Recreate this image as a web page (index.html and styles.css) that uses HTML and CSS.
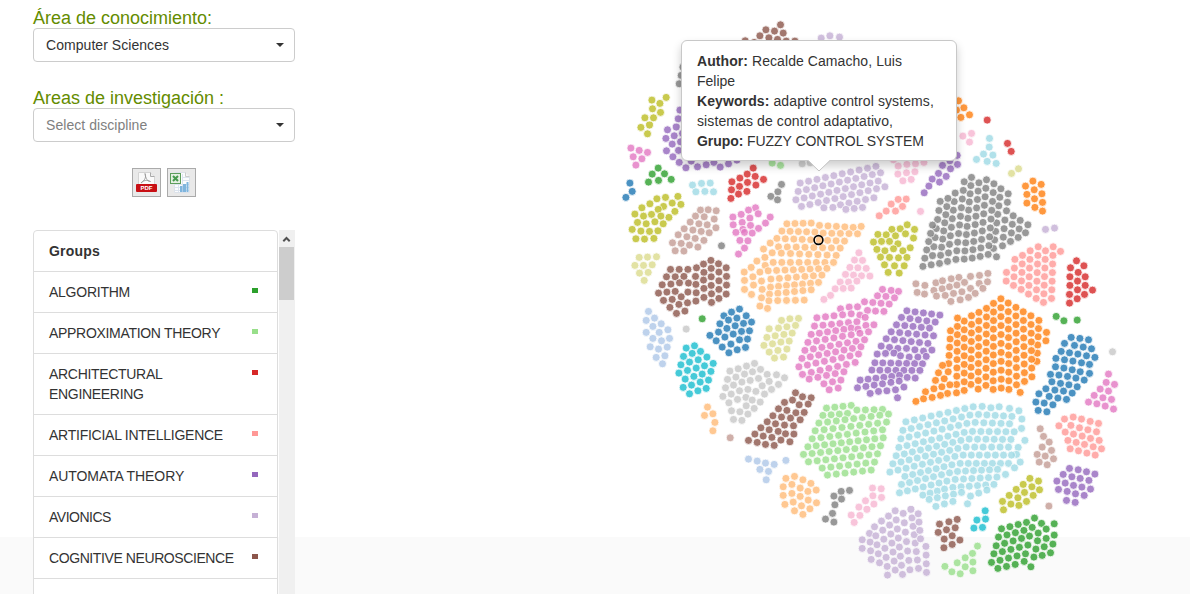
FILE: index.html
```html
<!DOCTYPE html>
<html lang="es">
<head>
<meta charset="utf-8">
<title>Groups</title>
<link rel="stylesheet" href="styles.css">
</head>
<body>
<div class="page">
  <aside class="sidebar">
    <label class="label">Área de conocimiento:</label>
    <div class="select">Computer Sciences<span class="caret"></span></div>
    <label class="label label-second">Areas de investigación :</label>
    <div class="select placeholder">Select discipline<span class="caret"></span></div>
    <div class="exports">
      <button class="export" aria-label="PDF">
        <svg width="27" height="27" viewBox="0 0 27 27">
          <path d="M5.500 3.500h12l4 4v14h-16z" fill="#fafafa" stroke="#d4d4d4"/>
          <path d="M17.500 3.500v4h4" fill="#eee" stroke="#aaa"/>
          <path d="M12 4.500c1.500 3 0 7-4 9.500c1.500-2.500 6.500-3.500 9.500-1.500c-2.500 .5-5-3-5.500-8z" fill="none" stroke="#999" stroke-width=".9"/>
          <rect x="3" y="15" width="21" height="8" rx="1" fill="#c80f14"/>
          <text x="13.500" y="21.200" class="pdf-text">PDF</text>
        </svg>
      </button>
      <button class="export" aria-label="Excel">
        <svg width="27" height="27" viewBox="0 0 27 27">
          <path d="M6.500 3.500h11l4 4v16h-15z" fill="#fbfcfe" stroke="#dce2ea"/>
          <path d="M7 15.500h14M7 18.500h14M10.500 12v11M14.500 5v18M7 21.500h14M14 8.500h7M14 11.500h7" stroke="#dbe4ef" fill="none"/>
          <path d="M17.500 3.500v4h4" fill="#f5f5f5" stroke="#ccc"/>
          <path d="M12 17h2.500v6H12zM15 15h3v8h-3zM18.500 13h2v10h-2z" fill="#7fb5de"/>
          <rect x="2.500" y="4.500" width="10" height="10" fill="#e4f0e2" stroke="#5d9e5c"/>
          <path d="M5 7l5 5M10 7l-5 5" stroke="#459a4c" stroke-width="2"/>
        </svg>
      </button>
    </div>
    <div class="list-area">
      <ul class="groups">
        <li class="item heading">Groups</li>
        <li class="item tight">ALGORITHM<i class="mark c4"></i></li>
        <li class="item snug">APPROXIMATION THEORY<i class="mark c5"></i></li>
        <li class="item snug">ARCHITECTURAL<br>ENGINEERING<i class="mark c6"></i></li>
        <li class="item tight">ARTIFICIAL INTELLIGENCE<i class="mark c7"></i></li>
        <li class="item loose">AUTOMATA THEORY<i class="mark c8"></i></li>
        <li class="item tightest">AVIONICS<i class="mark c9"></i></li>
        <li class="item tighter">COGNITIVE NEUROSCIENCE<i class="mark c10"></i></li>
        <li class="item">&nbsp;</li>
      </ul>
      <div class="scrollbar">
        <svg class="up" width="16" height="17" viewBox="0 0 16 17"><path d="M4.300 11.200L7.500 8l3.200 3.200" fill="none" stroke="#505050" stroke-width="2"/></svg>
        <div class="thumb"></div>
      </div>
    </div>
  </aside>
  <main class="chart">
    <svg id="bubbles" width="590" height="594" viewBox="600 0 590 594"></svg>
    <div class="popover">
      <div class="line-author"><b>Author:</b> Recalde Camacho, Luis</div>
      <div>Felipe</div>
      <div class="line-keywords"><b>Keywords:</b> adaptive control systems,</div>
      <div class="line-more">sistemas de control adaptativo,</div>
      <div class="line-group"><b>Grupo:</b> FUZZY CONTROL SYSTEM</div>
      <svg class="tip" width="24" height="12" viewBox="0 0 24 12"><path d="M1 0h22L12 10.500z" fill="#fff"/><path d="M1 .5L12 11L23 .5" fill="none" stroke="#c4c4c4"/></svg>
    </div>
  </main>
</div>
<script src="chart.js"></script>
</body>
</html>
```

FILE: styles.css
```css
* { box-sizing: border-box; }
body {
  margin: 0;
  height: 594px;
  overflow: hidden;
  background: linear-gradient(#fff 537px, #fafafa 537px);
  font: 14px/20px "Liberation Sans", Arial, sans-serif;
  color: #333;
}
.page { display: flex; height: 594px; overflow: hidden; }
.sidebar { width: 600px; flex: none; padding: 9px 0 0 33px; }
.label {
  display: block;
  height: 19px;
  line-height: 18px;
  font-size: 18px;
  color: #648c00;
}
.label-second { margin-top: 27px; }
.select {
  display: flex;
  align-items: center;
  justify-content: space-between;
  width: 262px;
  height: 34px;
  padding: 0 10px 0 12px;
  border: 1px solid #ccc;
  border-radius: 4px;
  background: #fff;
  letter-spacing: .05px;
}
.placeholder { color: #808080; }
.caret { border: 4px solid transparent; border-top-color: #333; border-bottom: 0; }
.exports { display: flex; gap: 6px; margin: 26px 0 0 99px; height: 29px; }
.export { width: 29px; height: 29px; padding: 0; border: 1px solid #aaa; background: #e9e9e9; }
.export svg { display: block; }
.pdf-text { font: bold 6px "Liberation Sans", Arial, sans-serif; fill: #fff; text-anchor: middle; }
.list-area { display: flex; gap: 1px; height: 364px; margin-top: 33px; overflow: hidden; }
.groups { width: 245px; margin: 0; padding: 0; list-style: none; }
.item {
  display: flex;
  justify-content: space-between;
  padding: 10px 19px 10px 15px;
  margin-bottom: -1px;
  border: 1px solid #ddd;
  background: #fff;
  white-space: nowrap;
}
.heading { font-weight: bold; border-radius: 4px 4px 0 0; letter-spacing: .2px; }
.loose { letter-spacing: -.08px; }
.tight { letter-spacing: -.25px; }
.snug { letter-spacing: -.31px; }
.tighter { letter-spacing: -.41px; }
.tightest { letter-spacing: -.5px; }
.item:nth-child(4) { display: grid; grid-template-columns: 1fr auto; }
.item:nth-child(4) .mark { grid-column: 2; grid-row: 1; }
.mark { width: 6px; height: 5px; margin-top: 6px; }
.c4 { background: #2ca02c; }
.c5 { background: #98df8a; }
.c6 { background: #d62728; }
.c7 { background: #ff9896; }
.c8 { background: #9467bd; }
.c9 { background: #c5b0d5; }
.c10 { background: #8c564b; }
.scrollbar { width: 16px; background: #f0f0f0; }
.up { display: block; }
.thumb { width: 15px; height: 53px; background: #cdcdcd; }
.chart { position: relative; width: 590px; }
.chart > svg { display: block; }
.popover {
  position: absolute;
  left: 81px;
  top: 40px;
  width: 276px;
  height: 121px;
  padding: 10px 14px 9px 15px;
  border: 1px solid #c8c8c8;
  border-radius: 6px;
  background: #fff;
  box-shadow: 0 5px 10px rgba(0, 0, 0, .2);
  white-space: nowrap;
}
.line-author { letter-spacing: .07px; }
.line-keywords, .line-more { letter-spacing: .1px; }
.line-group { letter-spacing: -.07px; }
.tip { position: absolute; left: 125px; top: 119px; }
```

FILE: chart.js
```js
const palette = {
  blue: "#1f77b4", lightblue: "#aec7e8", orange: "#ff7f0e", peach: "#ffbb78",
  green: "#2ca02c", lightgreen: "#98df8a", red: "#d62728", salmon: "#ff9896",
  purple: "#9467bd", lavender: "#c5b0d5", brown: "#8c564b", tan: "#c49c94",
  pink: "#e377c2", rose: "#f7b6d2", gray: "#7f7f7f", silver: "#c7c7c7",
  olive: "#bcbd22", khaki: "#dbdb8d", cyan: "#17becf", ice: "#9edae5"
};

// Cluster: colour, origin x, origin y, tokens in thirds of a pixel.
// "x,y" is one dot; "x1,y1,x2,y2,n" is a row of n evenly spaced dots.
const clusters = [
["brown",610,10,"511,44 467,59 493,63 519,69 449,77 476,83 502,88 405,92 432,97 528,93 554,93"],
["gray",610,10,"218,171 213,196 207,221"],
["olive",610,10,"168,262 125,270 149,280 127,296 151,307 104,323 130,323 118,345 92,352 112,371"],
["purple",610,10,"209,300 204,326 198,351 172,359 167,385 192,377 217,370 186,402 169,422 211,395 205,421 188,440 207,457 227,473 262,470 288,464 243,453 311,457 330,471 355,461 380,450"],
["pink",610,10,"62,414 87,421 112,427 69,440 95,446 77,465"],
["green",610,10,"144,474 126,492 163,491 115,516 145,511 183,508"],
["blue",610,10,"59,519 66,544 47,562"],
["ice",610,10,"247,525 274,520 300,519 257,545 284,544 310,545"],
["red",610,10,"429,474 411,492 389,504 435,499 365,515 460,508 388,529 412,517 437,525 364,539 385,552 410,544 362,565"],
["gray",610,10,"514,523 503,545 482,559 502,569"],
["lightgreen",610,10,"486,459 511,466"],
["silver",610,10,"576,461 600,458"],
["lavender",800,10,"63,84 89,77 118,81"],
["orange",800,10,"475,272 491,293 469,300 508,314 482,322"],
["red",800,10,"561,330 622,400 633,424"],
["rose",800,10,"488,378 514,370 508,396"],
["ice",800,10,"568,385 567,411 550,432 578,435 529,448 561,454 588,460"],
["khaki",800,10,"655,476 634,490"],
["rose",800,10,"280,449 294,468 320,463 346,461 371,457 293,492 319,488 344,485 308,512 333,508"],
["purple",800,10,"471,436 472,463 427,466 451,476 449,452 415,490 438,499 396,507 418,516 386,528 372,548"],
["lavender",800,10,"0,519,227,469,10 -6,544,241,488,11 -13,569,234,513,11 4,589,254,530,11 121,584,221,563,5 71,593 98,592 137,598 162,595 187,592"],
["salmon",780,180,"378,57 354,58 333,72 367,79 318,93 346,93 297,107"],
["rose",780,180,"421,94"],
["olive",780,180,"381,134 403,148 335,148 360,146 293,163 318,164 346,167 400,174 376,161 280,186 304,184 328,184 353,191 390,203 290,208 314,212 340,206 368,212 380,232 301,231 328,232 355,233 313,254 343,257 372,257 324,277 357,279"],
["olive",610,180,"203,49 166,52 140,56 212,73 186,69 160,79 119,71 194,94 144,88 95,83 176,112 152,108 124,103 100,108 74,102 159,131 134,125 108,131 82,127 143,152 118,154 92,153 66,148 131,175 103,177 77,176"],
["tan",610,180,"271,90 294,89 318,92 256,108 282,110 312,117 240,126 266,131 291,134 317,143 222,146 248,150 273,154 297,158 204,164 230,170 255,175 281,181 187,188 213,190 238,195 263,201 195,212 221,213"],
["gray",610,180,"334,197"],
["pink",610,180,"436,83 415,90 393,103 444,101 368,111 419,114 480,111 396,127 369,134 421,136 466,129 398,148 445,145 377,157 403,157 426,159 389,181 413,182 403,204 385,222"],
["khaki",610,180,"87,232 112,231 139,230 74,256 100,256 126,254 88,279 114,277 102,301"],
["brown",610,180,"302,241 181,268 207,268 233,268 259,263 280,252 325,251 303,265 348,263 169,290 195,290 221,289 256,289 281,277 326,276 303,290 349,289 156,314 182,312 208,308 235,309 257,313 280,300 326,302 303,316 349,315 145,339 170,336 195,334 233,336 258,338 281,325 326,328 304,341 348,342 160,361 186,358 213,350 257,363 281,352 326,355 304,367 179,382 206,373 232,368 199,400 224,393"],
["green",610,180,"276,416"],
["peach",780,180,"20,131,93,129,4 118,136,219,142,5 243,139 5,153,104,156,5 129,159,232,161,5 -10,175,193,183,9 -30,189 -5,200,180,204,8 -50,207 -24,218,168,226,8 -46,232 -70,243 -45,256 -21,247,160,247,8 -87,262 -61,276 -36,272,140,265,8"],
["peach",780,180,"-28,297,125,285,7 -29,321,115,307,7 -32,342,93,329,6 -34,362,72,360,5"],
["peach",610,180,"402,276 428,290 403,301 430,315 403,328 424,343 454,303 456,328 454,353 449,378 472,385"],
["rose",780,180,"236,218 223,240 247,241 209,262 233,263 258,265 196,283 220,285 244,287 269,288 180,306 205,306 230,303 165,326 189,325 213,324 151,346 131,358"],
["gray",940,160,"204,101,199,152,3 194,180,187,257,4 219,167,211,244,4 240,181,234,232,3 263,194 256,218 182,86,160,265,8 161,71,144,283,9 169,290 139,59,120,289,10 116,68,96,294,10 94,52,72,297,11 72,65,47,298,10 45,99,22,304,9 23,115,-2,310,9 0,124,-27,314,8 -23,195,-52,319,6"],
["orange",940,160,"278,63 303,73 256,78 282,89 305,101 260,103 283,116 307,127 260,129 284,142 307,153"],
["lavender",940,160,"316,208 343,204"],
["salmon",940,160,"361,274 339,260,334,415,7 316,272,310,427,7 294,260,288,415,7 270,272,265,402,6 247,286,243,388,5 224,298,220,376,4 199,337 198,363"],
["red",940,160,"409,302 431,317 391,323 414,337 389,350 435,350 412,363 389,376 435,376 457,390 412,389 433,403 388,403 411,416 388,429"],
["tan",940,160,"-73,371 -69,397 -46,376 -47,402 -19,391 -13,368 7,362 6,386 -11,408 15,406 33,356 56,352 28,380 50,375 73,367 91,349 118,346 143,340 142,365 117,370 91,385 128,385 40,400 65,395 105,400 85,412 60,419 32,424"],
["lightblue",630,300,"55,34 73,54 48,61 93,71 68,79 113,89 48,97 87,97 68,115 94,122 118,115 60,140 85,147 111,141 78,172 104,167 97,191"],
["silver",630,300,"168,87"],
["blue",630,300,"328,27 304,36 281,47 348,47 320,54 295,60 269,71 364,66 340,70 315,77 290,85 265,96 239,106 358,92 334,94 309,102 284,111 258,122 352,117 328,119 302,132 276,141 346,142 321,149 296,158"],
["cyan",630,300,"193,137 168,144 211,154 186,160 160,169 230,171 204,179 178,186 152,194 249,190 223,197 198,204 172,211 146,219 242,214 216,222 191,229 165,237 235,240 210,246 184,255 159,262 228,265 203,272 178,281"],
["khaki",630,300,"505,55 479,56 454,61 496,76 470,80 445,84 417,86 486,99 461,103 435,107 410,112 477,123 452,126 427,131 401,136 470,147 443,151 417,156 460,171 433,174"],
["silver",630,300,"373,190 349,198 324,206 299,213 391,208 367,215 343,222 317,231 292,238 439,224 411,223 385,235 360,241 335,246 310,255 286,263 463,233 417,244 445,253 396,257 353,268 328,272 303,282 278,289 424,268 377,274 403,282 347,292 366,300 322,298 296,308 390,306 348,317 372,325 304,332 329,335 353,342 310,358 335,361"],
["peach",630,300,"232,321 223,346 248,341 254,367 248,392"],
["tan",630,300,"300,413"],
["brown",630,300,"496,278 517,290 543,293 487,300 463,307 507,314 534,312 445,326 470,331 497,338 522,337 428,347 454,351 481,354 510,359 411,365 436,371 463,375 490,377 392,383 417,389 444,394 466,401 491,402 374,402 399,408 425,412 452,420 479,425 355,421 381,427 406,433 432,436"],
["lightblue",630,300,"355,477 381,483 406,489 432,493 467,481 389,508 415,514 408,539"],
["pink",780,300,"307,-32 333,-29 355,-26 292,-13 317,-11 343,-7 253,5,327,12,4 181,26 207,21 232,20 262,31 286,33 311,34 110,53,213,41,5 239,45 103,78,230,65,6 255,52 93,103,191,88,5 213,84 233,87 257,76 281,74 83,127,265,95,8 74,151,253,119,8 65,175,242,140,8 56,200,235,162,8 67,223,225,187,7 87,237,191,215,5 131,251 157,245 182,240 147,269 174,264"],
["purple",780,300,"380,32,479,45,5 364,52,465,66,5 349,74,448,84,5 333,95,460,107,6 318,116,443,130,6 303,138 328,142 353,145 379,145 404,149 430,153 455,150 291,162 316,160 341,159 361,167 387,171 413,171 438,169 284,188,427,191,7 275,210,419,211,7 240,240,358,226,6 381,232 405,234 232,263,357,243,6 371,261 270,280 295,274 320,272 346,269 352,293"],
["lightgreen",780,300,"139,324,213,316,4 128,346,202,340,4 230,330,307,328,4 116,369,325,342,9 105,392,319,366,9 96,416,307,389,9 83,440,309,413,10 70,463,301,437,10 85,485,292,461,9 126,504,283,486,7 142,525,273,510,6"],
["orange",940,300,"319,97 317,122 296,61,290,184,6 272,47,275,230,8 249,35,253,244,9 227,22,229,254,10 204,9,206,268,11 182,-4,183,264,11 160,10,159,268,11 139,25,137,256,10 116,37,114,267,10 94,47,92,253,9 72,63,72,271,9 52,54,49,278,10 31,92,24,215,6 7,196 -5,218 12,236 -14,241 29,254 22,280 -44,275 -19,266 5,260 -73,304 -50,296 -24,292 1,286 240,277"],
["ice",940,300,"-103,365,99,320,9 126,319 152,323 177,320 208,325 236,332 -112,391,89,345,9 115,343,215,349,5 245,357 -118,416,80,370,9 105,367,208,371,5 244,385 -124,442,72,397,9 97,394,222,395,6 254,421 -132,467,62,421,9 87,417,212,418,6 234,442 -142,491,53,445,9 78,441,205,441,6 229,463 -151,516,44,469,9 69,465,214,465,7 240,486"],
["ice",940,300,"-106,529,35,494,7 60,490,205,490,7 223,503 -116,553,28,518,7 52,514,172,508,6 196,523 -122,578,20,543,7 45,538,170,531,6 -52,585,13,567,4 38,562,161,553,6 -33,598,64,577,5 91,588,140,570,3 -13,619,38,604,3 82,611"],
["blue",940,300,"393,112 419,115 445,119 373,130 403,136 429,141 454,146 363,154 388,158 413,162 439,167 464,172 347,175 373,179 398,183 424,188 448,193 346,200 371,204 396,209 420,215 448,220 331,223 356,225 382,229 407,234 432,240 335,245 361,250 386,254 411,260 317,266 344,270 370,273 396,279 296,281 327,289 353,294 379,298 287,306 312,309 338,314 294,331 320,335"],
["silver",940,300,"517,155"],
["green",940,300,"348,49 371,62 411,60"],
["pink",940,300,"505,222 498,247 523,253 480,267 505,273 462,286 488,293 514,298 445,306 470,311 495,318 520,327"],
["salmon",940,300,"399,351 373,357 424,357 450,364 475,370 356,377 392,376 418,383 443,389 469,395 375,396 400,402 426,408 451,415 477,421 383,421 408,427 433,433 459,440 484,446 390,446 415,452 440,459 465,465"],
["tan",940,300,"300,386 310,409 327,426 306,441 334,451 291,463 315,468 340,476 297,486 321,494"],
["purple",910,430,"478,115 504,119 529,125 554,132 459,133 485,140 510,145 536,151 440,153 465,159 490,166 515,171 541,177 445,178 471,184 496,191 522,196 469,211 495,217"],
["olive",910,430,"359,145 385,153 339,163 365,170 388,179 318,178 343,187 369,196 297,196 323,203 349,214 277,214 302,222 326,226 280,239"],
["tan",910,430,"416,228"],
["cyan",910,430,"225,242 226,267 200,270 191,294 217,292"],
["brown",910,430,"141,268 116,275 88,282 135,293 109,299 84,307 126,317 102,327 149,330 126,343 101,353"],
["lightgreen",910,430,"202,348 187,370 165,383 188,396 141,398 165,410 104,409 188,422 125,425 150,431"],
["green",910,430,"274,296,349,277,4 373,264 394,280 432,281 265,321,341,301,4 366,292 384,309 408,297 258,347,334,325,4 358,318 382,332 408,325 432,315 251,371,353,345,5 377,357 402,350 428,342 244,397,346,371,5 371,381 396,376 421,368 263,415 289,409 315,403 342,394 362,410"],
["peach",740,430,"163,139 137,145 188,149 212,160 155,163 129,170 180,174 203,184 228,180 155,190 129,196 180,199 204,210 229,218 134,223 159,216 184,227 209,236 163,242 188,253"],
["gray",740,430,"328,181 303,184 281,198 304,207 284,224 277,250 256,267 281,276"],
["rose",740,430,"397,174 423,176 398,197 424,202 376,212 401,222 356,231 380,238 333,255 359,256 342,277"],
["lavender",740,430,"366,329 366,355 388,310,393,388,4 403,290,418,398,5 424,273,441,409,6 442,435 445,258,465,420,7 465,242,487,433,8 489,250,509,419,7 512,238,535,415,8 534,251,541,326,4 557,349,559,427,4"]
];

const svg = document.getElementById("bubbles");
function circle(attrs) {
  const c = document.createElementNS("http://www.w3.org/2000/svg", "circle");
  for (const k in attrs) c.setAttribute(k, attrs[k]);
  svg.appendChild(c);
}
for (const [color, ox, oy, data] of clusters) {
  for (const token of data.split(" ")) {
    const v = token.split(",").map(Number);
    const n = v[4] || 1;
    for (let i = 0; i < n; i++) {
      const t = n > 1 ? i / (n - 1) : 0;
      const x = n > 1 ? v[0] + (v[2] - v[0]) * t : v[0];
      const y = n > 1 ? v[1] + (v[3] - v[1]) * t : v[1];
      circle({ cx: (ox + x / 3 + 0.2).toFixed(1), cy: (oy + y / 3 + 0.1).toFixed(1), r: 4,
        fill: palette[color], stroke: "#fff", "stroke-width": 0.8, opacity: 0.8 });
    }
  }
}
circle({ cx: 818.5, cy: 240, r: 4.4, fill: "none", stroke: "#000", "stroke-width": 1.6 });
```
